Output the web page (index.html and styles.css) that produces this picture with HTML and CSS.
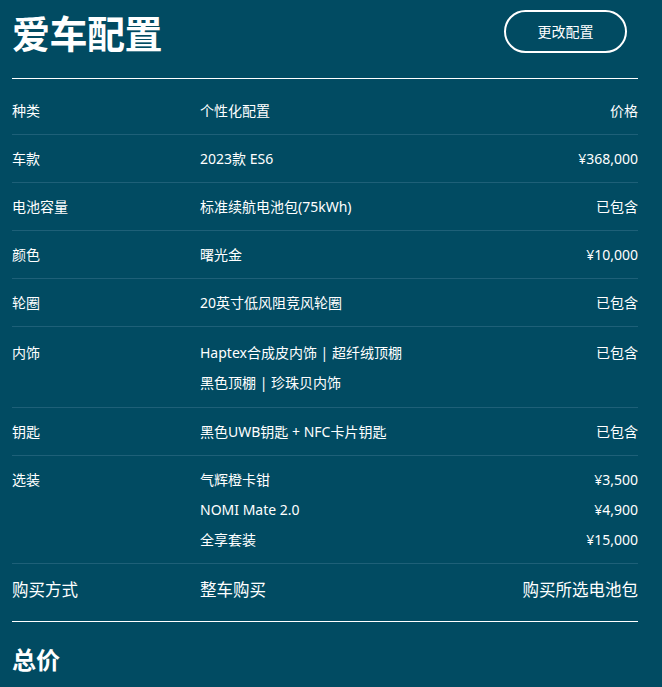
FILE: index.html
```html
<!DOCTYPE html>
<html lang="zh-CN">
<head>
<meta charset="utf-8">
<title>爱车配置</title>
<link rel="stylesheet" href="styles.css">
</head>
<body>
<main class="page">
  <header class="head">
    <h1 class="title">爱车配置</h1>
    <button class="btn">更改配置</button>
  </header>
  <section class="table">
    <div class="row row-head">
      <div class="c1">种类</div>
      <div class="c2">个性化配置</div>
      <div class="c3">价格</div>
    </div>
    <div class="row">
      <div class="c1">车款</div>
      <div class="c2">2023款 ES6</div>
      <div class="c3">¥368,000</div>
    </div>
    <div class="row">
      <div class="c1">电池容量</div>
      <div class="c2">标准续航电池包(75kWh)</div>
      <div class="c3">已包含</div>
    </div>
    <div class="row">
      <div class="c1">颜色</div>
      <div class="c2">曙光金</div>
      <div class="c3">¥10,000</div>
    </div>
    <div class="row">
      <div class="c1">轮圈</div>
      <div class="c2">20英寸低风阻竞风轮圈</div>
      <div class="c3">已包含</div>
    </div>
    <div class="row row-tall">
      <div class="c1">内饰</div>
      <div class="c2"><div>Haptex合成皮内饰 | 超纤绒顶棚</div><div>黑色顶棚 | 珍珠贝内饰</div></div>
      <div class="c3">已包含</div>
    </div>
    <div class="row">
      <div class="c1">钥匙</div>
      <div class="c2">黑色UWB钥匙 + NFC卡片钥匙</div>
      <div class="c3">已包含</div>
    </div>
    <div class="row">
      <div class="c1">选装</div>
      <div class="c2"><div>气辉橙卡钳</div><div>NOMI Mate 2.0</div><div>全享套装</div></div>
      <div class="c3"><div>¥3,500</div><div>¥4,900</div><div>¥15,000</div></div>
    </div>
    <div class="row row-buy">
      <div class="c1">购买方式</div>
      <div class="c2">整车购买</div>
      <div class="c3">购买所选电池包</div>
    </div>
  </section>
  <h2 class="total">总价</h2>
</main>
</body>
</html>
```
FILE: styles.css
```css
* { box-sizing: border-box; }
html, body {
  margin: 0;
  padding: 0;
  background: #014b62;
}
body {
  font-family: "Noto Sans", "Noto Sans CJK SC", sans-serif;
  color: #ffffff;
}
.page {
  width: 638px;
  padding-left: 12px;
}
.head {
  display: flex;
  justify-content: space-between;
  align-items: flex-start;
  padding-top: 10px;
  height: 79px;
  border-bottom: 1px solid #ffffff;
}
.title {
  margin: 0;
  font-size: 38px;
  line-height: 47px;
  font-weight: 700;
  letter-spacing: -0.5px;
}
.btn {
  margin-right: 11px;
  width: 123px;
  height: 43px;
  border: 2px solid #ffffff;
  border-radius: 22px;
  background: transparent;
  color: #ffffff;
  font-family: "Noto Sans", "Noto Sans CJK SC", sans-serif;
  font-size: 14px;
  padding: 0;
  padding-bottom: 1px;
}
.row {
  display: grid;
  grid-template-columns: 188px 1fr auto;
  padding: 9px 0 8px;
  border-bottom: 1px solid #1e6078;
  font-size: 14px;
  line-height: 30px;
}
.row-head {
  padding-top: 17px;
}
.row-tall {
  padding-top: 11px;
  padding-bottom: 9px;
}
.c3 {
  text-align: right;
}
.row-buy {
  font-size: 16.5px;
  padding: 11px 0 16px;
  border-bottom: 1px solid #ffffff;
}
.total {
  margin: 0;
  padding-top: 23px;
  font-size: 24px;
  line-height: 30px;
  font-weight: 700;
}
```
